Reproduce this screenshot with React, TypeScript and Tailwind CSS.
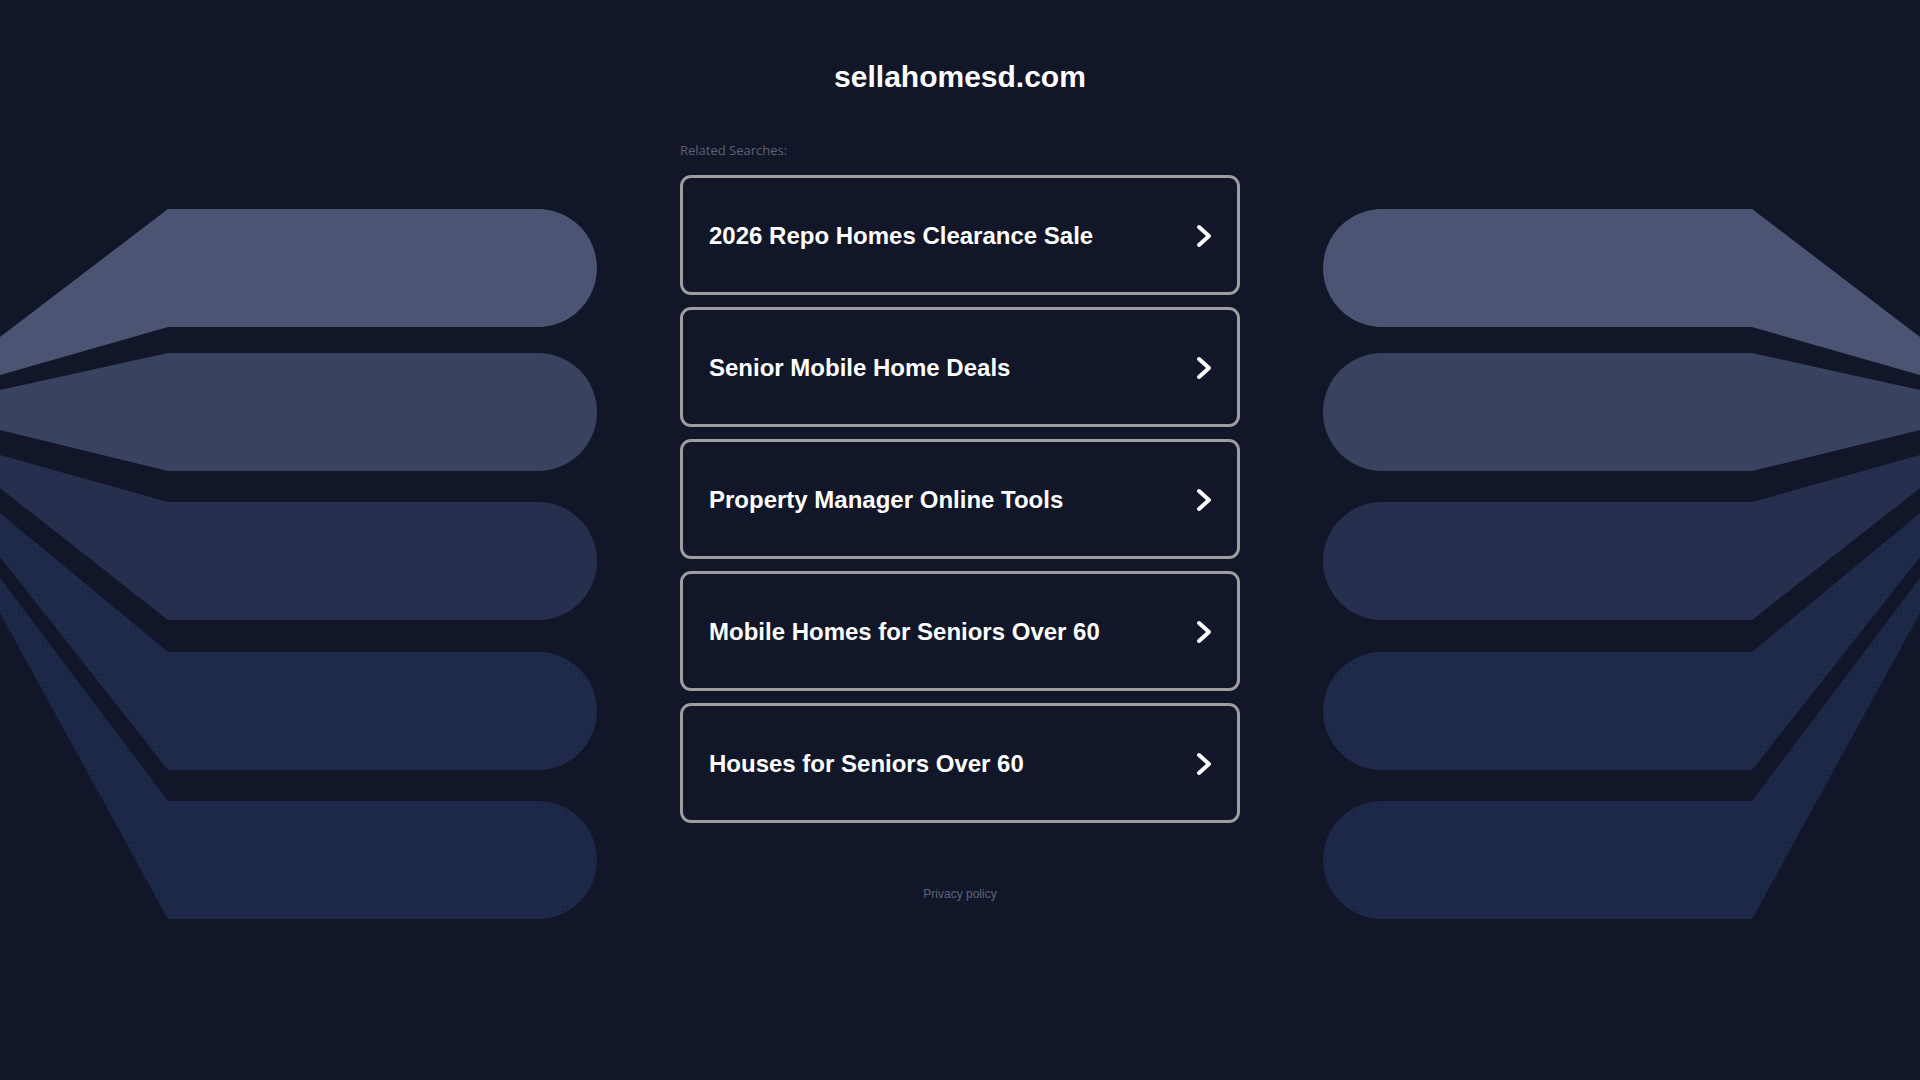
import React from "react";

/* Parked-domain landing: title, five related-search cards, privacy link,
   with the fanned shapes drawn on both sides. */

const searches = [
  "2026 Repo Homes Clearance Sale",
  "Senior Mobile Home Deals",
  "Property Manager Online Tools",
  "Mobile Homes for Seniors Over 60",
  "Houses for Seniors Over 60",
];

// Each band: wedge at the page edge (y0 top/bottom), flat bar from x=168 with a pill end.
const bands = [
  { edgeTop: 337, edgeBottom: 375, top: 209, fill: "#4b5573" },
  { edgeTop: 390, edgeBottom: 430, top: 353, fill: "#394360" },
  { edgeTop: 455, edgeBottom: 488, top: 502, fill: "#262f4e" },
  { edgeTop: 513, edgeBottom: 557, top: 652, fill: "#1e2949" },
  { edgeTop: 578, edgeBottom: 613, top: 801, fill: "#1c2747" },
];

function Fan({ mirrored }: { mirrored?: boolean }) {
  const h = 118;
  const r = h / 2;
  return (
    <svg
      width="600"
      height="1080"
      viewBox="0 0 600 1080"
      className={`absolute top-0 ${mirrored ? "right-0 -scale-x-100" : "left-0"}`}
      aria-hidden
    >
      <defs>
        <pattern id={mirrored ? "dotsR" : "dotsL"} width="4" height="4" patternUnits="userSpaceOnUse">
          <circle cx="1" cy="1" r="0.7" fill="#ffffff" fillOpacity="0.035" />
        </pattern>
      </defs>
      {bands.map((b, i) => {
        const bottom = b.top + h;
        const d = `M0 ${b.edgeTop} L168 ${b.top} L${597 - r} ${b.top} A${r} ${r} 0 0 1 ${597 - r} ${bottom} L168 ${bottom} L0 ${b.edgeBottom} Z`;
        return (
          <g key={i}>
            <path d={d} fill={b.fill} />
            {i >= 3 && <path d={d} fill={`url(#${mirrored ? "dotsR" : "dotsL"})`} />}
          </g>
        );
      })}
    </svg>
  );
}

function Chevron() {
  return (
    <svg width="16" height="24" viewBox="0 0 16 24" fill="none" className="flex-none" aria-hidden>
      <path d="M3 3 L13 12 L3 21" stroke="#ffffff" strokeWidth="4" strokeLinecap="round" strokeLinejoin="round" />
    </svg>
  );
}

export default function App() {
  return (
    <div className="relative min-h-[1080px] w-full overflow-hidden bg-[#111729] font-['Liberation_Sans',Arial,sans-serif]">
      <Fan />
      <Fan mirrored />

      <main className="relative flex flex-col items-center">
        <h1 className="pt-[59px] text-[30px] font-bold leading-[36px] text-white">
          sellahomesd.com
        </h1>

        <div className="mt-[47px] w-[560px]">
          <p className="font-['Open_Sans',sans-serif] text-[13px] font-medium leading-[17px] text-[#5b6179]">
            Related Searches:
          </p>

          <ul className="mt-[16px] flex flex-col gap-[12px]">
            {searches.map((s) => (
              <li key={s}>
                <a
                  href="#"
                  className="flex h-[120px] items-center justify-between rounded-[11px] border-[3px] border-[#9d9ea0] bg-[#111729] pl-[26px] pr-[25px] pt-[2px]"
                >
                  <span className="text-[24px] font-bold text-white">{s}</span>
                  <Chevron />
                </a>
              </li>
            ))}
          </ul>
        </div>

        <a href="#" className="mt-[63px] text-[12px] leading-[16px] text-[#5e6378]">
          Privacy policy
        </a>
      </main>
    </div>
  );
}
